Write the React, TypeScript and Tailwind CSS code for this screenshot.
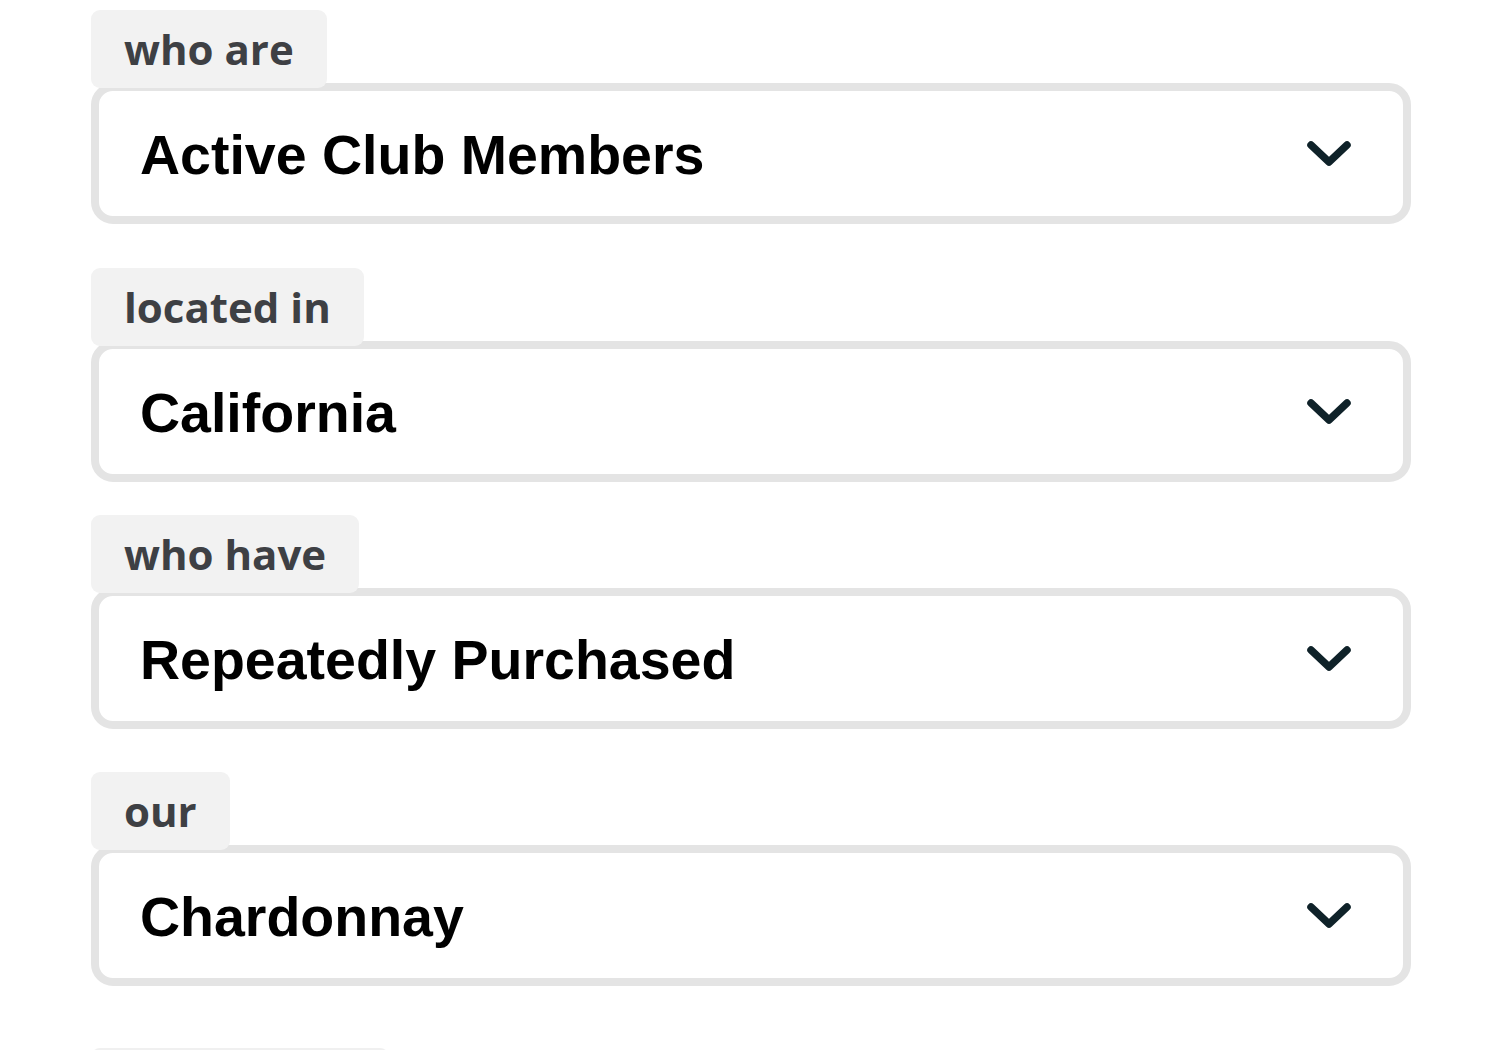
import React from "react";

function Chevron() {
  return (
    <svg width="48" height="34" viewBox="0 0 48 34" fill="none">
      <path d="M6 8 L24 25 L42 8" stroke="#0f2229" strokeWidth="7.5" strokeLinecap="round" strokeLinejoin="round" />
    </svg>
  );
}

function Group({ label, value, mt }: { label: string; value: string; mt: string }) {
  return (
    <div className={`flex flex-col items-start ${mt}`}>
      <div className="relative z-10 -mb-[5px] rounded-[9px] bg-[#f2f2f2] px-[33px] pt-[12px] pb-[12px] font-['Open_Sans',sans-serif] text-[42px] font-bold leading-[54px] text-[#3e4044]">
        {label}
      </div>
      <div className="flex h-[141px] w-full items-center justify-between rounded-[22px] border-[8px] border-[#e4e4e4] bg-white pl-[41px] pr-[50px]">
        <span className="mt-[4px] font-['Liberation_Sans',Arial,sans-serif] text-[55.5px] font-bold leading-none text-black">
          {value}
        </span>
        <Chevron />
      </div>
    </div>
  );
}

export default function App() {
  return (
    <div className="h-[1050px] w-[1500px] overflow-hidden bg-white">
      <div className="ml-[91px] w-[1320px] pt-[10px]">
        <Group label="who are" value="Active Club Members" mt="mt-0" />
        <Group label="located in" value="California" mt="mt-[44px]" />
        <Group label="who have" value="Repeatedly Purchased" mt="mt-[33px]" />
        <Group label="our" value="Chardonnay" mt="mt-[43px]" />
        <div className="mt-[62px] h-[40px] w-[298px] rounded-[9px] bg-[#f0f0f0]" />
      </div>
    </div>
  );
}
